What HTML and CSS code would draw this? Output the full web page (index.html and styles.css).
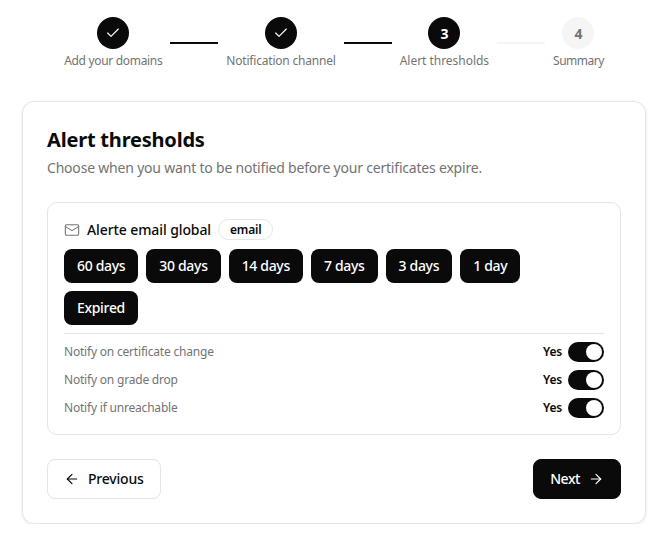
FILE: index.html
```html
<!DOCTYPE html>
<html lang="en">
<head>
  <meta charset="UTF-8">
  <title>Alert thresholds</title>
  <link rel="stylesheet" href="styles.css">
</head>
<body>
  <div class="stepper">
    <div class="step">
      <div class="step-dot">
        <svg width="16" height="16" viewBox="0 0 24 24" fill="none" stroke="currentColor" stroke-width="1.75" stroke-linecap="round" stroke-linejoin="round"><path d="M20 6 9 17l-5-5"/></svg>
      </div>
      <span class="step-label">Add your domains</span>
    </div>
    <div class="step-line"></div>
    <div class="step">
      <div class="step-dot">
        <svg width="16" height="16" viewBox="0 0 24 24" fill="none" stroke="currentColor" stroke-width="1.75" stroke-linecap="round" stroke-linejoin="round"><path d="M20 6 9 17l-5-5"/></svg>
      </div>
      <span class="step-label">Notification channel</span>
    </div>
    <div class="step-line"></div>
    <div class="step">
      <div class="step-dot">3</div>
      <span class="step-label alert">Alert thresholds</span>
    </div>
    <div class="step-line todo"></div>
    <div class="step">
      <div class="step-dot todo">4</div>
      <span class="step-label summary">Summary</span>
    </div>
  </div>

  <div class="card">
    <h2>Alert thresholds</h2>
    <p class="intro">Choose when you want to be notified before your certificates expire.</p>

    <div class="channel">
      <div class="channel-head">
        <svg class="mail-icon" width="16" height="16" viewBox="0 0 24 24" fill="none" stroke="#737373" stroke-width="1.6" stroke-linecap="round" stroke-linejoin="round"><rect x="2" y="4" width="20" height="16" rx="2"/><path d="m22 7-10 6L2 7"/></svg>
        <span class="channel-name">Alerte email global</span>
        <span class="badge">email</span>
      </div>
      <div class="chips">
        <span class="chip">60 days</span>
        <span class="chip">30 days</span>
        <span class="chip">14 days</span>
        <span class="chip">7 days</span>
        <span class="chip">3 days</span>
        <span class="chip">1 day</span>
        <span class="chip">Expired</span>
      </div>
      <div class="options">
        <div class="option">
          <span class="option-label">Notify on certificate change</span>
          <div class="option-value"><b>Yes</b><span class="toggle"></span></div>
        </div>
        <div class="option">
          <span class="option-label">Notify on grade drop</span>
          <div class="option-value"><b>Yes</b><span class="toggle"></span></div>
        </div>
        <div class="option">
          <span class="option-label">Notify if unreachable</span>
          <div class="option-value"><b>Yes</b><span class="toggle"></span></div>
        </div>
      </div>
    </div>

    <div class="actions">
      <button class="btn">
        <svg width="16" height="16" viewBox="0 0 24 24" fill="none" stroke="currentColor" stroke-width="1.75" stroke-linecap="round" stroke-linejoin="round"><path d="M19 12H5"/><path d="m12 19-7-7 7-7"/></svg>
        Previous
      </button>
      <button class="btn primary">
        Next
        <svg width="16" height="16" viewBox="0 0 24 24" fill="none" stroke="currentColor" stroke-width="1.75" stroke-linecap="round" stroke-linejoin="round"><path d="M5 12h14"/><path d="m12 5 7 7-7 7"/></svg>
      </button>
    </div>
  </div>
</body>
</html>
```

FILE: styles.css
```css
body {
  margin: 0;
  background-color: #fff;
  color: #0a0a0a;
  font-family: 'Noto Sans', sans-serif;
  font-size: 14px;
  letter-spacing: -0.2px;
}
.stepper {
  display: flex;
  justify-content: center;
  align-items: flex-start;
  gap: 8px;
  padding-top: 17px;
  height: 84px;
}
.step {
  display: flex;
  flex-direction: column;
  align-items: center;
  gap: 3px;
}
.step-dot {
  width: 32px;
  height: 32px;
  border-radius: 50%;
  background-color: #0a0a0a;
  color: #fff;
  display: flex;
  align-items: center;
  justify-content: center;
  font-size: 14px;
  font-weight: 700;
}
.step-dot.todo {
  background-color: #f5f5f5;
  color: #737373;
}
.step-label {
  font-size: 12px;
  color: #737373;
  white-space: nowrap;
}
.step:first-child .step-label {
  letter-spacing: -0.32px;
}
.step-label.alert {
  letter-spacing: -0.03px;
}
.step-label.summary {
  letter-spacing: -0.5px;
}
.step-line {
  width: 48px;
  height: 2px;
  margin-top: 25px;
  background-color: #0a0a0a;
}
.step-line.todo {
  background-color: #f5f5f5;
}
.card {
  margin: 0 22px;
  padding: 24px;
  border: 1px solid #e5e5e5;
  border-radius: 12px;
  box-shadow: 0 1px 3px rgba(0, 0, 0, 0.1);
}
h2 {
  margin: 0;
  font-size: 20px;
  font-weight: 700;
  line-height: 28px;
}
.intro {
  margin: 3px 0 0;
  color: #737373;
  font-size: 14px;
  line-height: 22px;
}
.channel {
  margin-top: 23px;
  padding: 16px;
  border: 1px solid #e5e5e5;
  border-radius: 10px;
}
.channel-head {
  display: flex;
  align-items: center;
  gap: 7px;
}
.channel-name {
  font-weight: 500;
  letter-spacing: -0.1px;
}
.badge {
  padding: 1px 11px;
  border: 1px solid #e5e5e5;
  border-radius: 999px;
  font-size: 12px;
  font-weight: 600;
}
.chips {
  display: flex;
  flex-wrap: wrap;
  gap: 8px;
  margin-top: 9px;
  padding-right: 8px;
}
.chip {
  padding: 0 13px;
  line-height: 34px;
  border-radius: 8px;
  background-color: #0a0a0a;
  color: #fff;
  font-weight: 500;
  letter-spacing: -0.32px;
}
.options {
  margin-top: 8px;
  padding-top: 8px;
  border-top: 1px solid #e5e5e5;
}
.option {
  display: flex;
  justify-content: space-between;
  align-items: center;
  height: 20px;
  margin-bottom: 8px;
  font-size: 12px;
  color: #737373;
}
.option:last-child {
  margin-bottom: 0;
}
.option-label {
  padding-bottom: 2px;
}
.option-value {
  display: flex;
  align-items: center;
  gap: 6px;
  color: #0a0a0a;
}
.option-value b {
  padding-bottom: 2px;
  font-weight: 600;
}
.toggle {
  position: relative;
  width: 36px;
  height: 20px;
  border-radius: 999px;
  background-color: #0a0a0a;
}
.toggle::after {
  content: '';
  position: absolute;
  top: 2px;
  right: 2px;
  width: 16px;
  height: 16px;
  border-radius: 50%;
  background-color: #fff;
}
.actions {
  display: flex;
  justify-content: space-between;
  margin-top: 24px;
}
.btn {
  display: flex;
  align-items: center;
  gap: 8px;
  height: 40px;
  padding: 0 16px 2px;
  border: 1px solid #e5e5e5;
  border-radius: 8px;
  background-color: #fff;
  color: #0a0a0a;
  font-family: inherit;
  font-size: 14px;
  font-weight: 500;
  letter-spacing: inherit;
}
.btn svg {
  margin-top: 2px;
}
.btn.primary {
  background-color: #0a0a0a;
  border-color: #0a0a0a;
  color: #fff;
  letter-spacing: -0.45px;
}
```
